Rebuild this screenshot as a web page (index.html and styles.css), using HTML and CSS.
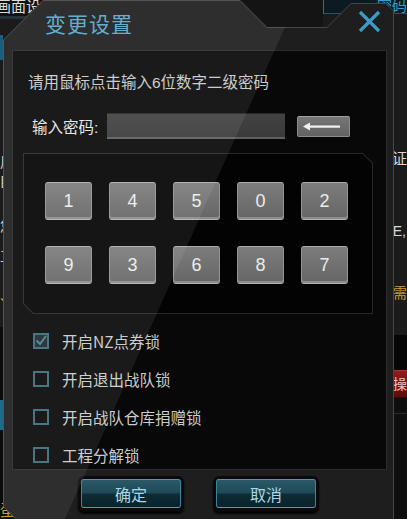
FILE: index.html
```html
<!DOCTYPE html>
<html lang="zh-CN">
<head>
<meta charset="utf-8">
<title>变更设置</title>
<link rel="stylesheet" href="styles.css">
</head>
<body>
<div class="bg-left">
  <div class="bl-top">画面设</div>
  <div class="bl-mid">
    <span class="glow"></span>
    <p class="frag l1">用</p>
    <p class="frag l2">臣</p>
    <p class="frag l3">您</p>
    <p class="frag l4">工</p>
    <p class="frag gold l5">、</p>
  </div>
  <div class="bl-bot">
    <span class="blue-bar"></span>
    <p class="frag gold egg">蛋</p>
  </div>
</div>

<div class="bg-right">
  <div class="br-top">密码</div>
  <div class="br-mid">
    <p class="frag r1">验证</p>
    <p class="frag r2">E,</p>
    <p class="frag gold r3">需要</p>
  </div>
  <div class="br-dark"></div>
  <div class="br-red">操行</div>
  <div class="br-low"><span class="rule"></span></div>
</div>

<div class="dialog">
  <svg class="frame" width="391" height="530" viewBox="0 0 391 530">
    <polygon points="0.5,40 40,0.5 237,0.5 264,27.5 324,27.5 348,3.5 383,3.5 390.5,11 390.5,530 24,530 0.5,506.5" fill="#1e1e1e" stroke="#474747" stroke-width="1"/>
  </svg>

  <header class="head">
    <h1 class="title">变更设置</h1>
    <svg class="close" width="23" height="23" viewBox="0 0 23 23">
      <path d="M2 2 L21 21 M21 2 L2 21" stroke="#3c9cc7" stroke-width="3.2" fill="none"/>
    </svg>
  </header>

  <section class="panel">
    <p class="hint">请用鼠标点击输入6位数字二级密码</p>

    <div class="pwd-row">
      <label class="pwd-label">输入密码:</label>
      <div class="pwd-field"></div>
      <button class="back" type="button">
        <svg width="37" height="9" viewBox="0 0 37 9">
          <polygon points="0,4.5 7,0.5 7,8.5" fill="#f2f2f2"/>
          <rect x="6" y="3.5" width="31" height="2.2" fill="#f2f2f2"/>
        </svg>
      </button>
    </div>

    <div class="pad">
      <div class="pad-in">
        <button class="key" type="button">1</button>
        <button class="key" type="button">4</button>
        <button class="key" type="button">5</button>
        <button class="key" type="button">0</button>
        <button class="key" type="button">2</button>
        <button class="key" type="button">9</button>
        <button class="key" type="button">3</button>
        <button class="key" type="button">6</button>
        <button class="key" type="button">8</button>
        <button class="key" type="button">7</button>
      </div>
    </div>

    <ul class="opts">
      <li class="opt">
        <svg class="box" width="16" height="16" viewBox="0 0 16 16">
          <rect x="1" y="1" width="14" height="14" fill="#1d2a2f" stroke="#3c6a7a" stroke-width="2"/>
          <path d="M3.5 7.5 L7 11 L13 3" stroke="#4f8090" stroke-width="2" fill="none"/>
        </svg>
        <span>开启<span class="lat">NZ</span>点券锁</span>
      </li>
      <li class="opt">
        <svg class="box" width="16" height="16" viewBox="0 0 16 16">
          <rect x="1" y="1" width="14" height="14" fill="none" stroke="#3c6a7a" stroke-width="2"/>
        </svg>
        <span>开启退出战队锁</span>
      </li>
      <li class="opt">
        <svg class="box" width="16" height="16" viewBox="0 0 16 16">
          <rect x="1" y="1" width="14" height="14" fill="none" stroke="#3c6a7a" stroke-width="2"/>
        </svg>
        <span>开启战队仓库捐赠锁</span>
      </li>
      <li class="opt">
        <svg class="box" width="16" height="16" viewBox="0 0 16 16">
          <rect x="1" y="1" width="14" height="14" fill="none" stroke="#3c6a7a" stroke-width="2"/>
        </svg>
        <span>工程分解锁</span>
      </li>
    </ul>
  </section>

  <footer class="actions">
    <button class="act" type="button">确定</button>
    <button class="act" type="button">取消</button>
  </footer>
</div>
</body>
</html>
```

FILE: styles.css
```css
* { box-sizing: border-box; margin: 0; padding: 0; }

html, body { width: 407px; height: 519px; overflow: hidden; }

body {
  position: relative;
  display: flex;
  justify-content: space-between;
  background: #141414;
  font-family: "Liberation Sans", "Noto Sans CJK SC", sans-serif;
  color: #c8c8c8;
}

/* ---------- background scene ---------- */
.bg-left { width: 40px; display: flex; flex-direction: column; }
.bl-top {
  height: 19px;
  font-size: 15px;
  line-height: 14px;
  color: #dcdcdc;
  text-indent: -4px;
  border-bottom: 3px solid #25323a;
  background: #111;
  overflow: hidden;
  white-space: nowrap;
}
.bl-mid { height: 308px; background: #1b1b1b; display: flex; flex-direction: column; }
.glow { display: block; width: 3px; height: 25px; margin-top: 16px; background: #1b5f7c; }
.frag { font-size: 14px; line-height: 14px; color: #d8d8d8; white-space: nowrap; }
.gold { color: #c9a030; }
.l1 { margin-top: 95px; }
.l2 { margin-top: 6px; }
.l3 { margin-top: 30px; }
.l4 { margin-top: 16px; }
.l5 { margin-top: 26px; }
.bl-bot { flex: 1; background: #0b0b0b; display: flex; flex-direction: column; }
.blue-bar { display: block; width: 4px; height: 30px; margin-top: 73px; background: #1e6c8a; }
.egg { margin-top: 73px; font-size: 16px; line-height: 16px; }

.bg-right { width: 84px; display: flex; flex-direction: column; }
.br-top {
  height: 14px;
  background: #0c1a21;
  border-left: 1px solid #2d6f8d;
  border-bottom: 1px solid #24556b;
  color: #2ea3d9;
  font-size: 15px;
  line-height: 12px;
  text-align: right;
  overflow: hidden;
  white-space: nowrap;
}
.br-mid { height: 321px; background: #1b1b1b; display: flex; flex-direction: column; align-items: flex-end; }
.r1 { margin-top: 138px; font-size: 15px; }
.r2 { margin-top: 58px; padding-right: 1px; }
.r3 { margin-top: 48px; align-self: flex-start; padding-left: 70px; }
.br-dark { height: 35px; background: #060606; }
.br-red {
  height: 28px;
  background: linear-gradient(#8e1e1e, #5a0c0c);
  border-top: 1px solid #a83434;
  border-bottom: 1px solid #3a0606;
  color: #f0c4c4;
  font-size: 14px;
  line-height: 26px;
  padding-left: 70px;
  white-space: nowrap;
  overflow: hidden;
}
.br-low { flex: 1; background: #0e0e0e; display: flex; flex-direction: column; }
.rule { display: block; margin-top: 15px; border-top: 1px solid #2a2a2a; }

/* ---------- dialog ---------- */
.dialog {
  position: absolute;
  left: 3px;
  top: 0;
  width: 391px;
  height: 530px;
  display: flex;
  flex-direction: column;
  font-family: "Liberation Sans", "Noto Sans CJK SC", sans-serif;
}
.frame { position: absolute; left: 0; top: 0; z-index: 0; }
.head, .panel, .actions { position: relative; z-index: 1; }
.dialog::after {
  content: "";
  position: absolute;
  inset: 0;
  z-index: 2;
  pointer-events: none;
  background: rgba(255, 255, 255, 0.075);
  clip-path: polygon(0 40px, 40px 0, 237px 0, 264px 27px, 282px 27px, 57px 530px, 24px 530px, 0 506px);
}

.head {
  height: 50px;
  display: flex;
  justify-content: space-between;
  align-items: flex-start;
  padding: 10px 13px 0 42px;
}
.title {
  font-family: "Noto Sans CJK SC", sans-serif;
  font-size: 21px;
  font-weight: normal;
  line-height: 26px;
  color: #5aa7cd;
  letter-spacing: 1px;
}
.close { display: block; }

.panel {
  margin-left: 9px;
  width: 375px;
  height: 420px;
  border: 1px solid #2b2b2b;
  background: #080808;
  display: flex;
  flex-direction: column;
}
.hint {
  margin: 22px 0 0 15px;
  font-size: 15.5px;
  line-height: 20px;
  color: #cacaca;
  white-space: nowrap;
}
.pwd-row {
  margin: 20px 0 0 19px;
  height: 26px;
  display: flex;
  align-items: center;
}
.pwd-label {
  width: 75px;
  font-size: 15.5px;
  color: #e6e6e6;
  white-space: nowrap;
}
.pwd-field {
  width: 178px;
  height: 26px;
  border-top: 1px solid #262626;
  border-bottom: 2px solid #5e5e5e;
  background: linear-gradient(#424242, #3a3a3a);
}
.back {
  margin-left: 12px;
  width: 53px;
  height: 21px;
  border: 1px solid #8c8c8c;
  border-top-color: #a0a0a0;
  border-radius: 2px;
  background: linear-gradient(#767676, #626262);
  display: flex;
  align-items: center;
  justify-content: center;
  padding: 0 4px 0 0;
}
.back svg { display: block; }

.pad {
  margin: 14px 0 0 10px;
  width: 350px;
  height: 161px;
  padding: 1px;
  background: #272727;
  clip-path: polygon(0 0, calc(100% - 10px) 0, 100% 10px, 100% 100%, 10px 100%, 0 calc(100% - 10px));
}
.pad-in {
  height: 100%;
  background: #030303;
  clip-path: polygon(0 0, calc(100% - 9.5px) 0, 100% 9.5px, 100% 100%, 9.5px 100%, 0 calc(100% - 9.5px));
  display: grid;
  grid-template-columns: repeat(5, 47px);
  grid-auto-rows: 38px;
  column-gap: 17px;
  row-gap: 26px;
  padding: 28px 0 0 21px;
}
.key {
  font-family: "Liberation Sans", sans-serif;
  font-size: 18px;
  color: #ececec;
  border: 1px solid #8a96a1;
  border-top-color: #adadad;
  border-bottom-color: #b4b4b4;
  border-radius: 3px;
  background: linear-gradient(#7c7c7c, #666666);
  box-shadow: inset 0 -2px 0 #8c8c8c;
}

.opts {
  list-style: none;
  margin: 17px 0 0 20px;
  display: flex;
  flex-direction: column;
  gap: 18px;
}
.opt {
  height: 20px;
  display: flex;
  align-items: center;
  gap: 13px;
  font-size: 15.5px;
  color: #cccccc;
}
.lat { font-family: "Noto Sans CJK SC", sans-serif; }
.box { display: block; flex: none; }

.actions {
  height: 60px;
  display: flex;
  justify-content: center;
  align-items: flex-start;
  gap: 35px;
  padding-top: 9px;
}
.act {
  width: 100px;
  height: 29px;
  font-family: "Noto Sans CJK SC", sans-serif;
  font-size: 16px;
  line-height: 1;
  color: #a9d8e8;
  border: 1px solid #3b8499;
  border-top-color: #4f9ab0;
  border-bottom-color: #4aa0b8;
  border-radius: 3px;
  background: linear-gradient(#2c5967 0%, #1f4a58 46%, #0e2c36 54%, #0a2129 100%);
  box-shadow: 0 0 0 3px #0a0a0a, 0 3px 2px 3px #040404;
}
```
